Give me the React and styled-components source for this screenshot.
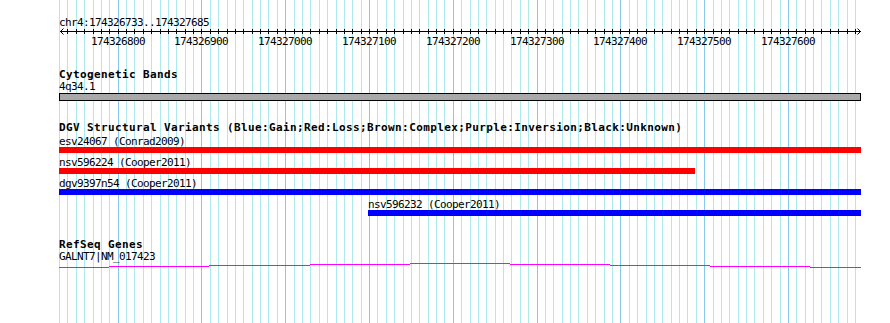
import React from 'react';
import styled, { createGlobalStyle } from 'styled-components';

const VIEW_START = 174326733;
const VIEW_END = 174327685;
const GRID_START = 174326730;
const X0 = 59;
const X_END = 861;
const PX_PER_BP = 0.8379;

const toPx = (bp) => X0 + (bp - GRID_START) * PX_PER_BP;
const clampPx = (x) => Math.max(X0, Math.min(X_END, x));

const gridBps = [];
for (let bp = GRID_START; bp <= 174327680; bp += 10) gridBps.push(bp);

const majorBps = gridBps.filter((bp) => bp % 100 === 0);

const variants = [
  { name: 'esv24067', source: 'Conrad2009', color: '#ff0000', start: 174326500, end: 174328200 },
  { name: 'nsv596224', source: 'Cooper2011', color: '#ff0000', start: 174326500, end: 174327489 },
  { name: 'dgv9397n54', source: 'Cooper2011', color: '#0000ff', start: 174326500, end: 174328200 },
  { name: 'nsv596232', source: 'Cooper2011', color: '#0000ff', start: 174327099, end: 174328200 },
];

// gene glyph: shallow arc drawn as 1px steps
const geneSteps = [
  [59, 109, 5], [109, 209, 4], [209, 310, 3], [310, 410, 2], [410, 510, 1],
  [510, 610, 2], [610, 710, 3], [710, 810, 4], [810, 861, 5],
];

const GlobalStyle = createGlobalStyle`
  html, body {
    margin: 0;
    padding: 0;
    background: #ffffff;
  }
`;

const Canvas = styled.div`
  position: relative;
  width: 890px;
  height: 323px;
  overflow: hidden;
  background: #ffffff;
`;

const Grid = styled.svg`
  position: absolute;
  left: 0;
  top: 0;
  width: 890px;
  height: 323px;
  shape-rendering: crispEdges;
`;

const Tracks = styled.div`
  position: relative;
  width: 803px;
  padding-left: ${X0}px;
  display: flex;
  flex-direction: column;
`;

const Small = styled.div`
  font-family: "DejaVu Sans Mono", "Liberation Mono", monospace;
  font-size: 11px;
  letter-spacing: -0.62px;
  line-height: 12px;
  height: 10px;
  color: #000;
  white-space: pre;
  margin-top: ${(p) => p.$top || 0}px;
`;

const Title = styled.div`
  font-family: "DejaVu Sans Mono", "Liberation Mono", monospace;
  font-weight: bold;
  font-size: 11px;
  letter-spacing: 0.38px;
  line-height: 12px;
  height: 10px;
  color: #000;
  white-space: pre;
  margin-top: ${(p) => p.$top}px;
`;

const RulerSvg = styled.svg`
  display: block;
  width: 803px;
  height: 9px;
  shape-rendering: crispEdges;
`;

const TickRow = styled.div`
  position: relative;
  height: 10px;
`;

const TickLabel = styled.span`
  position: absolute;
  top: 0;
  transform: translateX(-50%);
  font-family: "DejaVu Sans Mono", "Liberation Mono", monospace;
  font-size: 11px;
  letter-spacing: -0.62px;
  line-height: 12px;
  white-space: pre;
  color: #000;
`;

const BandBar = styled.div`
  margin-top: 2px;
  width: 800px;
  height: 6px;
  background: #a9a9a9;
  border: 1px solid #000;
`;

const FeatureList = styled.div`
  margin-top: 4px;
  display: flex;
  flex-direction: column;
`;

const Feature = styled.div`
  display: flex;
  flex-direction: column;
  height: 21px;
`;

const FeatureBar = styled.div`
  margin-top: 1px;
  height: 6px;
  background: ${(p) => p.$color};
`;

const GeneSvg = styled.svg`
  display: block;
  margin-top: 1px;
  width: 803px;
  height: 7px;
  shape-rendering: crispEdges;
`;

const Ruler = () => {
  const y = 4;
  return (
    <RulerSvg viewBox="0 0 803 9">
      <line x1={1} y1={y + 0.5} x2={802} y2={y + 0.5} stroke="#000" />
      <path d={`M1.5 ${y + 0.5} L4.5 ${y - 2.5} M1.5 ${y + 0.5} L4.5 ${y + 3.5}`} stroke="#000" shapeRendering="auto" />
      <path d={`M801.5 ${y + 0.5} L798.5 ${y - 2.5} M801.5 ${y + 0.5} L798.5 ${y + 3.5}`} stroke="#000" shapeRendering="auto" />
      {gridBps.slice(1).map((bp) => {
        const x = Math.round(toPx(bp)) - X0 + 0.5;
        return <line key={bp} x1={x} y1={y - 2} x2={x} y2={y + 3} stroke="#000" />;
      })}
    </RulerSvg>
  );
};

const App = () => (
  <Canvas>
    <GlobalStyle />
    <Grid viewBox="0 0 890 323">
      {gridBps.map((bp) => {
        const x = Math.round(toPx(bp)) + 0.5;
        const major = bp % 100 === 0;
        return (
          <line key={bp} x1={x} y1={0} x2={x} y2={323} stroke={major ? '#86c9ef' : '#aee9ee'} />
        );
      })}
    </Grid>
    <Tracks>
      <Small $top={17}>{`chr4:${VIEW_START}..${VIEW_END}`}</Small>
      <Ruler />
      <TickRow>
        {majorBps.map((bp) => (
          <TickLabel key={bp} style={{ left: Math.round(toPx(bp)) - X0 }}>{bp}</TickLabel>
        ))}
      </TickRow>

      <Title $top={23}>Cytogenetic Bands</Title>
      <Small $top={2}>4q34.1</Small>
      <BandBar />

      <Title $top={21}>DGV Structural Variants (Blue:Gain;Red:Loss;Brown:Complex;Purple:Inversion;Black:Unknown)</Title>
      <FeatureList>
        {variants.map((v) => {
          const left = clampPx(toPx(v.start));
          const right = clampPx(toPx(v.end));
          return (
            <Feature key={v.name}>
              <Small style={{ marginLeft: Math.round(left) - X0 }}>{`${v.name} (${v.source})`}</Small>
              <FeatureBar $color={v.color} style={{ marginLeft: Math.round(left) - X0, width: Math.round(right - left) }} />
            </Feature>
          );
        })}
      </FeatureList>

      <Title $top={19}>RefSeq Genes</Title>
      <Small $top={2}>GALNT7|NM_017423</Small>
      <GeneSvg viewBox="0 0 803 7">
        {geneSteps.map(([a, b, lvl]) => (
          <rect key={a} x={a - X0} y={lvl} width={b - a} height={1} fill="#ff00ff" />
        ))}
      </GeneSvg>
    </Tracks>
  </Canvas>
);

export default App;
